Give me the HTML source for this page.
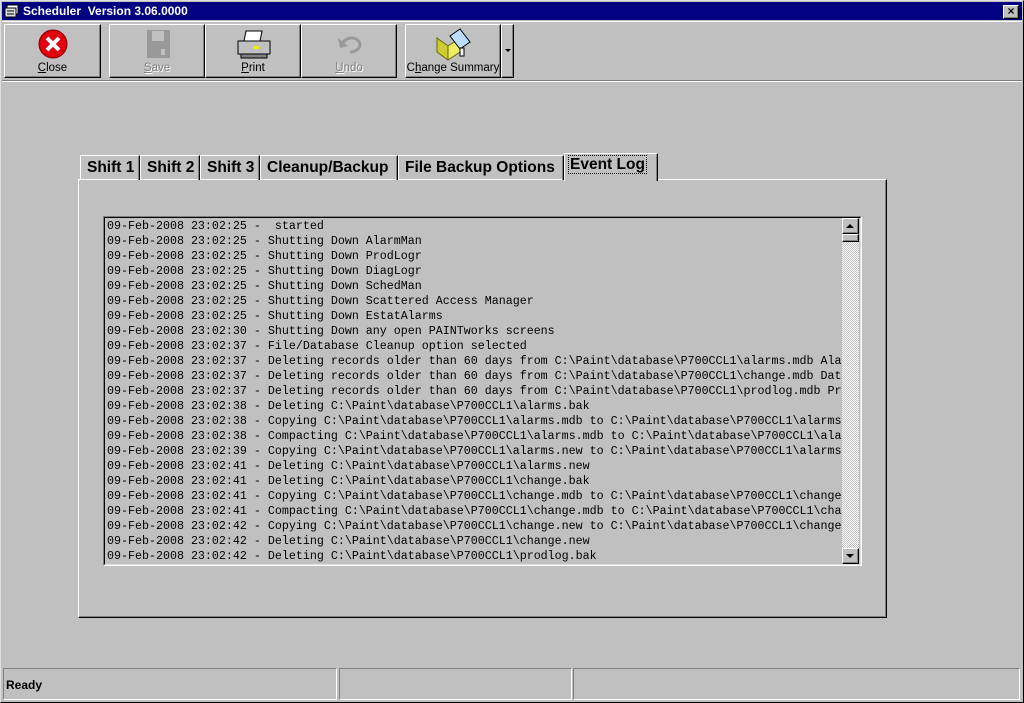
<!DOCTYPE html>
<html><head><meta charset="utf-8"><style>
*{margin:0;padding:0;box-sizing:border-box}
body{width:1024px;height:703px;background:#c0c0c0;position:relative;overflow:hidden;font-family:"Liberation Sans",Arial,sans-serif;font-size:11px;color:#000}
.a{position:absolute}
.out{border:1px solid;border-color:#fff #000 #000 #fff;box-shadow:inset -1px -1px 0 #808080}
.in{border:1px solid;border-color:#808080 #fff #fff #808080}
.btn{position:absolute;top:24px;height:54px;text-align:center}
.btn .l{position:absolute;left:0;right:0;top:37px;font-size:11.5px}
.dis{color:#808080;text-shadow:1px 1px 0 #fff}
.tab{position:absolute;top:155px;height:25px;border:1px solid;border-color:#fff #000 transparent #fff;box-shadow:inset -1px 0 0 #808080;font-size:15.5px;font-weight:bold;padding:3px 0 0 6px;border-bottom:none;white-space:nowrap}
.log{font-family:"Liberation Mono","Courier New",monospace;font-size:11.67px;line-height:15px;white-space:pre;position:absolute;left:107px;top:219px;width:734px;overflow:hidden}
</style></head><body>
<div class="a" style="left:0;top:0;width:1024px;height:703px;border:1px solid;border-color:#dfdfdf #000 #000 #dfdfdf"></div>
<div class="a" style="left:2px;top:2px;width:1020px;height:18px;background:#000080"></div>
<svg class="a" style="left:4px;top:4px" width="16" height="14"><rect x="3" y="1" width="11" height="9" fill="#fff" stroke="#000"/><rect x="1" y="4" width="11" height="9" fill="#ddd" stroke="#000"/><line x1="3" y1="7" x2="10" y2="7" stroke="#000"/><line x1="3" y1="10" x2="10" y2="10" stroke="#000"/></svg>
<div class="a" style="left:23px;top:4px;color:#fff;font-weight:bold;font-size:12px">Scheduler&nbsp; Version 3.06.0000</div>
<div class="a out" style="left:1003px;top:5px;width:16px;height:14px;background:#c0c0c0;font-size:12px;font-weight:bold;line-height:11px;text-align:center">×</div>
<div class="a" style="left:2px;top:21px;width:1020px;height:1px;background:#fff"></div>

<div class="btn out" style="left:4px;width:97px"><svg class="a" style="left:32px;top:3px" width="32" height="32"><circle cx="16" cy="16" r="14" fill="#e00010" stroke="#800" /><path d="M10 10L22 22M22 10L10 22" stroke="#fff" stroke-width="4"/></svg><div class="l"><u>C</u>lose</div></div>
<div class="btn out" style="left:109px;width:96px"><svg class="a" style="left:36px;top:4px" width="26" height="30"><path d="M1 1H24V29H1Z" fill="#999"/><rect x="6" y="2" width="12" height="10" fill="#c0c0c0"/><rect x="15" y="20" width="4" height="6" fill="#c0c0c0"/></svg><div class="l dis"><u>S</u>ave</div></div>
<div class="btn out" style="left:205px;width:96px"><svg class="a" style="left:31px;top:4px" width="34" height="30"><path d="M9 2H25L23 12H7Z" fill="#fff" stroke="#000"/><rect x="1" y="12" width="32" height="13" fill="#c0c0c0" stroke="#000"/><rect x="4" y="25" width="26" height="4" fill="#808080" stroke="#000"/><rect x="16" y="17" width="6" height="3" fill="#ee0"/></svg><div class="l"><u>P</u>rint</div></div>
<div class="btn out" style="left:301px;width:96px"><svg class="a" style="left:34px;top:7px" width="28" height="24"><path d="M6 12C10 4 22 4 24 12C24 18 18 20 14 20" fill="none" stroke="#999" stroke-width="3"/><path d="M2 6L4 16L12 14Z" fill="#999"/></svg><div class="l dis"><u>U</u>ndo</div></div>
<div class="btn out" style="left:405px;width:96px"><svg class="a" style="left:30px;top:3px" width="36" height="34"><path d="M1 10L12 18V32L1 24Z" fill="#cc3" stroke="#660"/><path d="M12 18L24 10V24L12 32Z" fill="#ee6" stroke="#660"/><path d="M14 8L24 1L34 14L24 21Z" fill="#bdf" stroke="#000"/><path d="M24 20V28H28V20Z" fill="#fff" stroke="#000"/></svg><div class="l">C<u>h</u>ange Summary</div></div>
<div class="btn out" style="left:501px;width:13px"><div class="a" style="left:3px;top:24px;border:3px solid transparent;border-top:3px solid #000;border-bottom:0"></div></div>
<div class="a" style="left:2px;top:80px;width:1020px;height:1px;background:#808080"></div>
<div class="a" style="left:2px;top:81px;width:1020px;height:1px;background:#fff"></div>

<div class="a out" style="left:78px;top:179px;width:809px;height:439px"></div>
<div class="tab" style="left:80px;width:60px">Shift 1</div>
<div class="tab" style="left:140px;width:60px">Shift 2</div>
<div class="tab" style="left:200px;width:60px">Shift 3</div>
<div class="tab" style="left:260px;width:138px">Cleanup/Backup</div>
<div class="tab" style="left:398px;width:166px">File Backup Options</div>
<div class="tab" style="left:564px;top:153px;height:28px;width:94px;background:#c0c0c0;padding:2px 0 0 4px"><span style="outline:1px dotted #000;padding:0 1px">Event Log</span></div>

<div class="a" style="left:103px;top:216px;width:759px;height:350px;border:1px solid;border-color:#808080 #fff #fff #808080"><div style="width:100%;height:100%;border:1px solid;border-color:#000 #dfdfdf #dfdfdf #000"></div></div>
<div class="a" style="left:842px;top:218px;width:17px;height:346px;background:repeating-conic-gradient(#fff 0 25%,#c0c0c0 0 50%) 0 0/2px 2px"></div>
<div class="a out" style="left:842px;top:218px;width:17px;height:16px;background:#c0c0c0"><div class="a" style="left:3px;top:5px;border:4px solid transparent;border-bottom:4px solid #000;border-top:0"></div></div>
<div class="a out" style="left:842px;top:234px;width:17px;height:8px;background:#c0c0c0"></div>
<div class="a out" style="left:842px;top:548px;width:17px;height:16px;background:#c0c0c0"><div class="a" style="left:3px;top:5px;border:4px solid transparent;border-top:4px solid #000;border-bottom:0"></div></div>
<div class="log">09-Feb-2008 23:02:25 -  started
09-Feb-2008 23:02:25 - Shutting Down AlarmMan
09-Feb-2008 23:02:25 - Shutting Down ProdLogr
09-Feb-2008 23:02:25 - Shutting Down DiagLogr
09-Feb-2008 23:02:25 - Shutting Down SchedMan
09-Feb-2008 23:02:25 - Shutting Down Scattered Access Manager
09-Feb-2008 23:02:25 - Shutting Down EstatAlarms
09-Feb-2008 23:02:30 - Shutting Down any open PAINTworks screens
09-Feb-2008 23:02:37 - File/Database Cleanup option selected
09-Feb-2008 23:02:37 - Deleting records older than 60 days from C:\Paint\database\P700CCL1\alarms.mdb Alarms
09-Feb-2008 23:02:37 - Deleting records older than 60 days from C:\Paint\database\P700CCL1\change.mdb Data
09-Feb-2008 23:02:37 - Deleting records older than 60 days from C:\Paint\database\P700CCL1\prodlog.mdb Prod
09-Feb-2008 23:02:38 - Deleting C:\Paint\database\P700CCL1\alarms.bak
09-Feb-2008 23:02:38 - Copying C:\Paint\database\P700CCL1\alarms.mdb to C:\Paint\database\P700CCL1\alarms.bak
09-Feb-2008 23:02:38 - Compacting C:\Paint\database\P700CCL1\alarms.mdb to C:\Paint\database\P700CCL1\alarms
09-Feb-2008 23:02:39 - Copying C:\Paint\database\P700CCL1\alarms.new to C:\Paint\database\P700CCL1\alarms.mdb
09-Feb-2008 23:02:41 - Deleting C:\Paint\database\P700CCL1\alarms.new
09-Feb-2008 23:02:41 - Deleting C:\Paint\database\P700CCL1\change.bak
09-Feb-2008 23:02:41 - Copying C:\Paint\database\P700CCL1\change.mdb to C:\Paint\database\P700CCL1\change.bak
09-Feb-2008 23:02:41 - Compacting C:\Paint\database\P700CCL1\change.mdb to C:\Paint\database\P700CCL1\change
09-Feb-2008 23:02:42 - Copying C:\Paint\database\P700CCL1\change.new to C:\Paint\database\P700CCL1\change.mdb
09-Feb-2008 23:02:42 - Deleting C:\Paint\database\P700CCL1\change.new
09-Feb-2008 23:02:42 - Deleting C:\Paint\database\P700CCL1\prodlog.bak</div>

<div class="a in" style="left:3px;top:668px;width:334px;height:32px"></div>
<div class="a in" style="left:339px;top:668px;width:233px;height:32px"></div>
<div class="a in" style="left:573px;top:668px;width:447px;height:32px"></div>
<div class="a" style="left:6px;top:678px;font-size:12px;font-weight:bold">Ready</div>
</body></html>
